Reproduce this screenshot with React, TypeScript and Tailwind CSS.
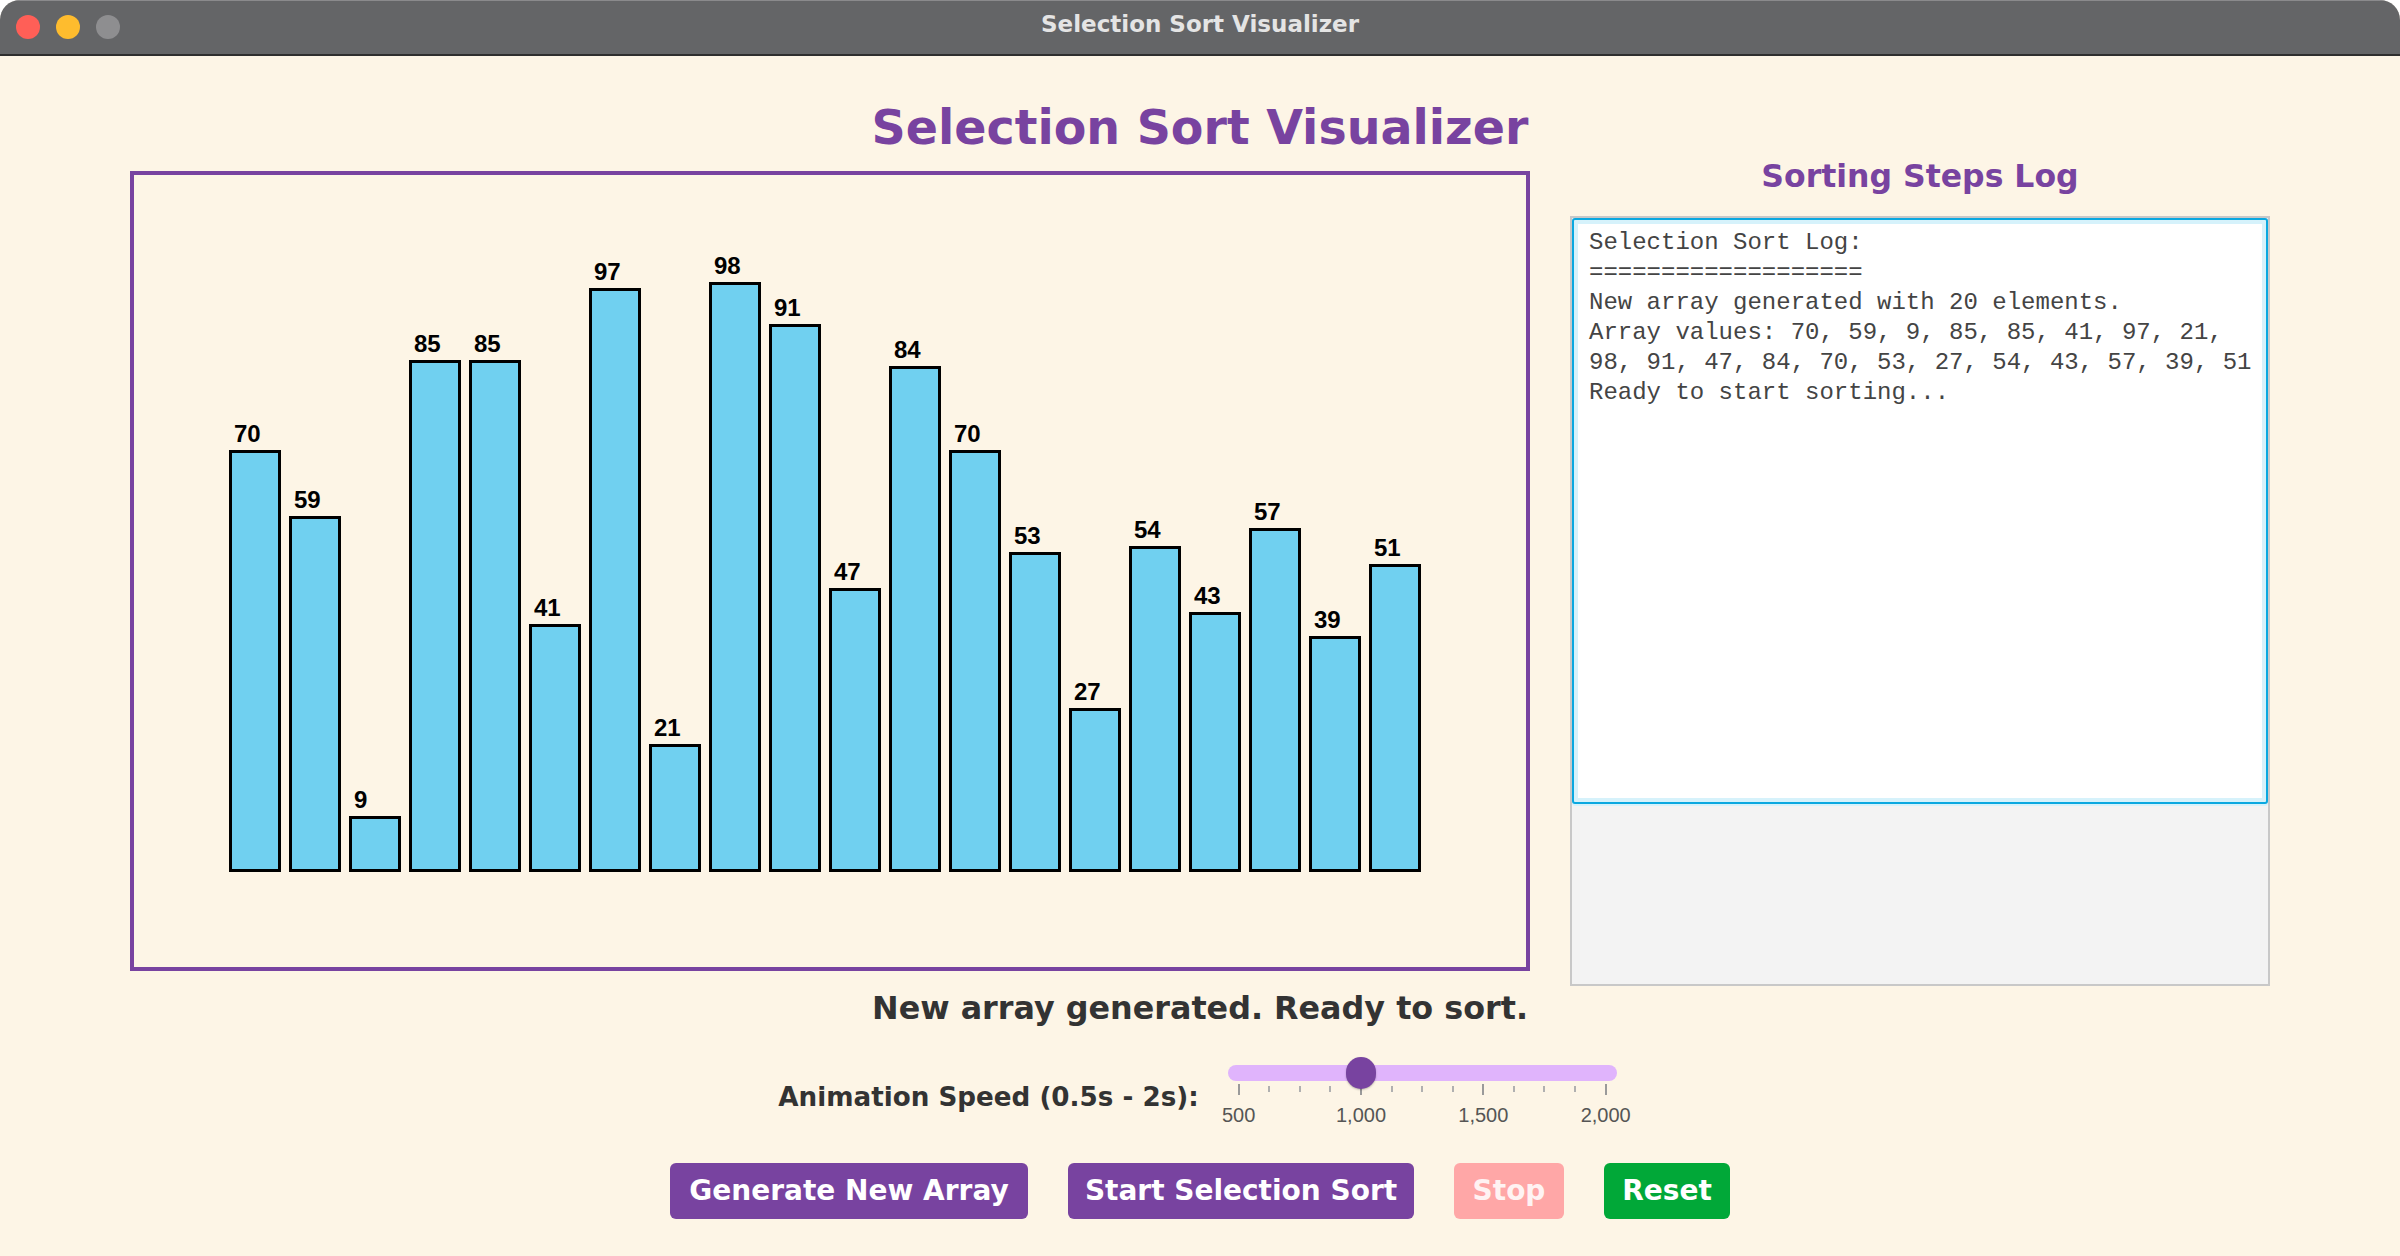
import React from 'react';

const values = [70, 59, 9, 85, 85, 41, 97, 21, 98, 91, 47, 84, 70, 53, 27, 54, 43, 57, 39, 51];

const logText = `Selection Sort Log:
===================
New array generated with 20 elements.
Array values: ${values.join(', ')}
Ready to start sorting...`;

// 500..2000 in steps of 125, labels every 500
const ticks = Array.from({ length: 13 }, (_, i) => i % 4 === 0);
const tickLabels = ['500', '1,000', '1,500', '2,000'];

const TitleBar = () => (
  <div className="grid h-[56px] grid-cols-[1fr_auto_1fr] items-center border-b-2 border-[#2e2e2e] bg-[#646567] shadow-[inset_0_1px_0_#8a8a8c]">
    <div className="ml-[15.5px] flex gap-[16px]">
      <span className="h-[24px] w-[24px] rounded-full bg-[#ff5f57]" />
      <span className="h-[24px] w-[24px] rounded-full bg-[#febc2e]" />
      <span className="h-[24px] w-[24px] rounded-full bg-[#8e8e90]" />
    </div>
    <div className="pb-[6px] font-['DejaVu_Sans',Verdana,sans-serif] text-[23px] font-bold text-[#e4e4e4]">
      Selection Sort Visualizer
    </div>
    <div />
  </div>
);

const Chart = () => (
  <div className="mt-[15px] h-[800px] w-[1400px] shrink-0 border-4 border-[#7843a0]">
    <div className="flex h-[697px] items-end gap-[8px] pl-[95px]">
      {values.map((v, i) => (
        <div key={i} className="flex w-[52px] flex-col">
          <span className="mb-[4px] h-[24px] pl-[5px] font-['Liberation_Sans',Arial,sans-serif] text-[24px] font-bold leading-[24px] text-black">
            {v}
          </span>
          <div className="border-[3px] border-black bg-[#70d0f0]" style={{ height: v * 6 + 2 }} />
        </div>
      ))}
    </div>
  </div>
);

const LogPanel = () => (
  <div className="flex w-[700px] shrink-0 flex-col">
    <h2 className="h-[40px] text-center font-['DejaVu_Sans',Verdana,sans-serif] text-[31.5px] font-bold leading-[40px] text-[#7843a0]">
      Sorting Steps Log
    </h2>
    <div className="mt-[20px] h-[770px] border-2 border-[#c8c8c8] bg-[#f3f3f3]">
      <div className="h-[586px] rounded-[3px] border-2 border-[#0aa8e0] bg-white pt-[8px] pr-[8px] pl-[15px] shadow-[inset_0_0_0_4px_#d6f2fb,0_2px_0_#d6f2fb] font-['Liberation_Mono','Courier_New',monospace] text-[24px] leading-[30px] whitespace-pre-wrap text-[#444]">
        {logText}
      </div>
    </div>
  </div>
);

const SpeedSlider = () => (
  <div className="relative h-[70px] w-[427px]">
    <div className="mx-[19px] mt-[9px] h-[16px] rounded-full bg-[#e0b4fc]" />
    <div className="absolute top-[1px] left-[137px] h-[32px] w-[30px] rounded-full bg-[#7843a0] shadow-[0_1px_2px_rgba(0,0,0,0.25)]" />
    <div className="mt-[3px] flex items-start justify-between px-[29px]">
      {ticks.map((major, i) => (
        <span key={i} className={major ? 'h-[11px] w-[2px] bg-[#9a9a9a]' : 'mt-[2px] h-[6px] w-[2px] bg-[#b0b0b0]'} />
      ))}
    </div>
    <div className="mt-[8px] flex justify-between">
      {tickLabels.map((t) => (
        <span key={t} className="w-[60px] text-center font-['Liberation_Sans',Arial,sans-serif] text-[20px] leading-[24px] text-[#555]">
          {t}
        </span>
      ))}
    </div>
  </div>
);

const btn = 'h-[56px] rounded-[6px] text-center font-[\'DejaVu_Sans\',Verdana,sans-serif] text-[28px] font-bold';

export default function App() {
  return (
    <div className="h-[1256px] w-[2400px] overflow-hidden bg-white">
      <div className="flex h-full flex-col overflow-hidden rounded-t-[20px] bg-[#fdf5e6]">
        <TitleBar />
        <main className="flex flex-1 flex-col items-center">
          <h1 className="mt-[44px] h-[56px] font-['DejaVu_Sans',Verdana,sans-serif] text-[47.5px] font-bold leading-[56px] text-[#7843a0]">
            Selection Sort Visualizer
          </h1>
          <div className="flex h-[830px] w-full items-start gap-[40px] pl-[130px]">
            <Chart />
            <LogPanel />
          </div>
          <p className="mt-[2px] h-[40px] font-['DejaVu_Sans',Verdana,sans-serif] text-[31.8px] font-bold leading-[40px] text-[#333]">
            New array generated. Ready to sort.
          </p>
          <div className="mt-[28px] flex w-full items-start justify-center gap-[10px] pl-[14px]">
            <span className="mt-[25px] font-['DejaVu_Sans',Verdana,sans-serif] text-[26.2px] font-bold leading-[32px] text-[#333]">
              Animation Speed (0.5s - 2s):
            </span>
            <SpeedSlider />
          </div>
          <div className="mt-[37px] flex gap-[40px]">
            <button className={`${btn} w-[358px] bg-[#7843a0] text-white`}>Generate New Array</button>
            <button className={`${btn} w-[346px] bg-[#7843a0] text-white`}>Start Selection Sort</button>
            <button className={`${btn} w-[110px] bg-[#ffa7a7] text-[#fff3f3]`}>Stop</button>
            <button className={`${btn} w-[126px] bg-[#01a838] text-white`}>Reset</button>
          </div>
        </main>
      </div>
    </div>
  );
}
